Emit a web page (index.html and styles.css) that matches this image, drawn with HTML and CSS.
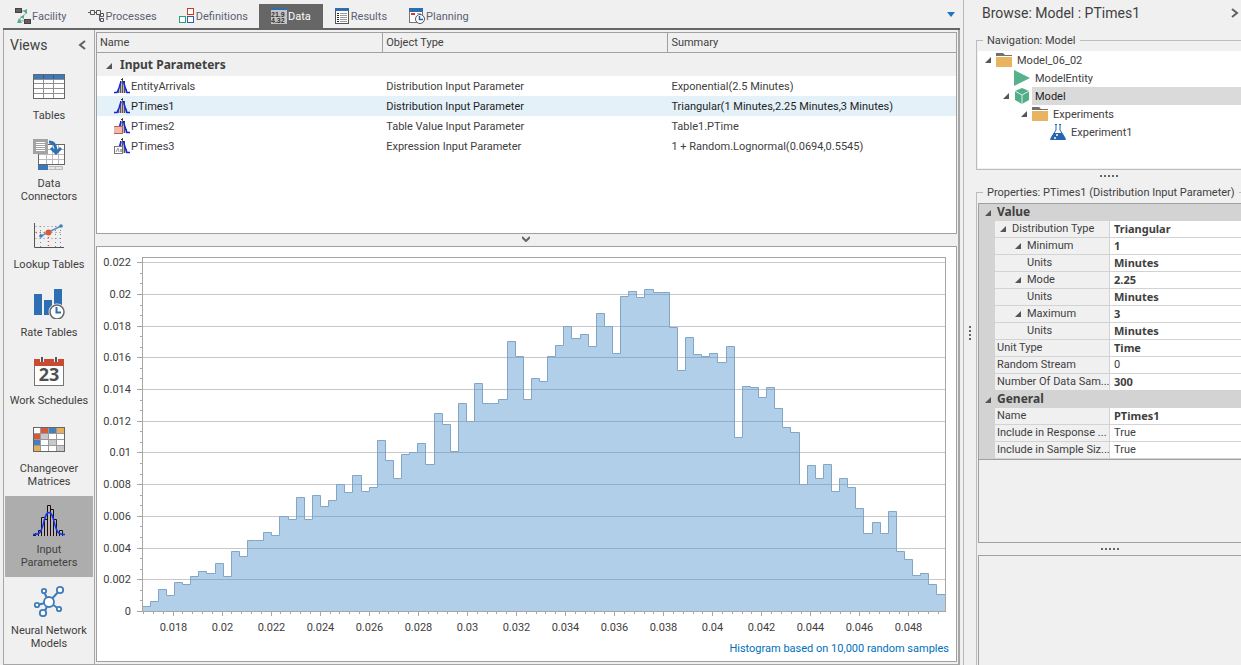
FILE: index.html
```html
<!DOCTYPE html>
<html lang="en">
<head>
    <meta charset="UTF-8">
    <meta name="viewport" content="width=device-width, initial-scale=1.0">
    <title>Model : PTimes1</title>
    <link rel="stylesheet" href="styles.css">
</head>
<body>
    <!-- shared icons -->
    <svg class="defs" width="0" height="0">
        <symbol id="dist" viewBox="0 0 16 16">
            <path d="M4.500 15V11M6.500 15V5M8.500 15V0M10.500 15V3M12.500 15V11" stroke="#5c5654"/>
            <path d="M5.500 15V10M7.500 15V3M9.500 15V3M11.500 15V8" stroke="#c3b8b4"/>
            <path d="M7 1.500H9M6 3.500H7M9 3.500H11" stroke="#333"/>
            <path d="M0 14.500H3L5 10L7 3.500" fill="none" stroke="#1226e8" stroke-width="1.500"/>
            <path d="M9.500 3.500L11 9L13 14.500H16" fill="none" stroke="#1226e8" stroke-width="1.500"/>
        </symbol>
        <symbol id="folder" viewBox="0 0 16 14">
            <path d="M0 0H7L9 2H16V3H0Z" fill="#707070"/>
            <rect y="4" width="16" height="10" fill="#e9b45f"/>
        </symbol>
        <symbol id="arrow" viewBox="0 0 6 6"><path d="M6 0V6H0Z" fill="#555"/></symbol>
    </svg>

    <div class="app">
        <div class="main">
            <nav class="tabs">
                <button class="tab">
                    <svg width="16" height="16"><path d="M6 3C14 2 12 5 8 8S3 13 11 13" fill="none" stroke="#999"/><path d="M8 3l4-2v5zM5 9l4-2v4zM4 10l3 5H2z" fill="#4fae8b"/><rect x="0.500" y="0.500" width="6" height="4" fill="#606060" stroke="#444"/><rect x="9.500" y="11.500" width="6" height="4" fill="#606060" stroke="#444"/></svg>
                    Facility
                </button>
                <button class="tab">
                    <svg width="16" height="16"><path d="M0 4.500H3M6 4.500H9M11.500 6V12.500H13M11.500 8.500H13" fill="none" stroke="#555f70"/><path d="M2.500 2.500H6.500V6.500H2.500ZM8.500 2.500H12.500V6.500H8.500ZM12.500 5.500H15.500V8.500H12.500ZM12.500 10.500H15.500V13.500H12.500Z" fill="#f0f0f0" stroke="#555"/></svg>
                    Processes
                </button>
                <button class="tab">
                    <svg width="16" height="16"><g fill="#fff" stroke-width="1"><rect x="8.500" y="0.500" width="6" height="6" stroke="#d23a22"/><rect x="0.500" y="8.500" width="6" height="6" stroke="#2aa079"/><rect x="8.500" y="8.500" width="6" height="6" stroke="#2a62ad"/></g></svg>
                    Definitions
                </button>
                <button class="tab active">
                    <svg width="16" height="16"><rect width="16" height="16" fill="#c4c4c4"/><rect width="16" height="2" fill="#2d6eb0"/><text x="0" y="9" class="digits">21.9</text><text x="0" y="15" class="digits">4.32</text></svg>
                    Data
                </button>
                <button class="tab">
                    <svg width="16" height="16"><rect x="1.500" y="0.500" width="13" height="15" fill="#fff" stroke="#555"/><rect x="1" width="14" height="3" fill="#2d6eb0"/><path d="M3 5.500H5M3 7.500H5M3 9.500H5M3 11.500H5M3 13.500H5" stroke="#222"/><path d="M6 5.500H13M6 7.500H13M6 9.500H13M6 11.500H13M6 13.500H13" stroke="#999"/></svg>
                    Results
                </button>
                <button class="tab">
                    <svg width="16" height="16"><rect x="0.500" y="0.500" width="13" height="14" fill="#fff" stroke="#777"/><rect width="14" height="4" fill="#2d6eb0"/><rect x="2" y="5" width="4" height="2" fill="#d23a22"/><path d="M8 5.500H12" stroke="#aaa"/><circle cx="11" cy="11" r="4.500" fill="#fff" stroke="#555"/><path d="M10.500 8V11.500H14" fill="none" stroke="#2a62ad" stroke-width="1.500"/></svg>
                    Planning
                </button>
                <button class="tab-menu" aria-label="More tabs"><svg width="8" height="5"><path d="M0 0H8L4 5Z" fill="#1c74c4"/></svg></button>
            </nav>

            <div class="workspace">
                <aside class="views">
                    <div class="views-head">
                        <span>Views</span>
                        <button class="chevron" aria-label="Collapse views"><svg width="8" height="10"><path d="M7 1L2 5L7 9" fill="none" stroke="#606060" stroke-width="2"/></svg></button>
                    </div>
                    <button class="view">
                        <svg width="32" height="32"><rect x="0.500" y="4.500" width="31" height="24" fill="#fff" stroke="#666"/><rect x="1" y="5" width="30" height="4" fill="#3f79b8"/><path d="M1 9.500H31M1 13.500H31M1 18.500H31M1 23.500H31M10.500 9V28M20.500 9V28" stroke="#909090"/><path d="M10.500 5V9M20.500 5V9" stroke="#2b5d96"/></svg>
                        Tables
                    </button>
                    <button class="view">
                        <svg width="32" height="32"><rect x="5.500" y="6.500" width="26" height="20" fill="#fff"/><path d="M6 16.500H31M6 21.500H31M13.500 6V26M19.500 6V26M25.500 6V26M6 11.500H31" stroke="#bbb"/><rect x="5.500" y="6.500" width="26" height="20" fill="none" stroke="#666"/><rect y="1" width="15" height="15" fill="#a3a3a3"/><path d="M3 4.500H12M3 6.500H12M3 8.500H12M3 10.500H12M3 12.500H12" stroke="#fff"/><rect x="5" y="27" width="10" height="5" fill="#3b78b7"/><path d="M15.500 28.500H29.500V31.500H15.500M22.500 28V32" fill="#e5e5e5" stroke="#bbb"/><path d="M16 4C21 4 23 7 23 14" fill="none" stroke="#2e70b3" stroke-width="3"/><path d="M18 10L23 15L28 10" fill="none" stroke="#2e70b3" stroke-width="3"/></svg>
                        Data<br>Connectors
                    </button>
                    <button class="view">
                        <svg width="32" height="32"><path d="M2.500 7.500H30M2.500 13.500H30M2.500 19.500H30M7.500 7V28M22.500 7V28M27.500 7V28" stroke="#888" stroke-dasharray="1 3"/><path d="M3 13.500H15M15.500 14V28" stroke="#d75a39" stroke-dasharray="1 3" stroke-width="1.500"/><path d="M1.500 4V28.500H31" fill="none" stroke="#555"/><path d="M8 17L28 7" stroke="#5b8fc8" stroke-width="1.500"/><circle cx="8" cy="17" r="1.800" fill="#3f7ec1"/><circle cx="28" cy="7" r="1.800" fill="#3f7ec1"/><circle cx="15.500" cy="13.500" r="3" fill="#d75a39"/></svg>
                        Lookup Tables
                    </button>
                    <button class="view">
                        <svg width="32" height="32"><path d="M1 7H9V28H1ZM11 13H19V28H11ZM21 2H29V28H21Z" fill="#2e6eb2"/><circle cx="24" cy="25" r="7.500" fill="#fff" stroke="#f0f0f0" stroke-width="2"/><circle cx="24" cy="25" r="7" fill="#fff" stroke="#666" stroke-width="1.500"/><path d="M23.500 20V25.500H28" fill="none" stroke="#2e6eb2" stroke-width="2"/></svg>
                        Rate Tables
                    </button>
                    <button class="view">
                        <svg width="32" height="32"><rect x="1.500" y="5.500" width="29" height="25" fill="#fff" stroke="#777"/><rect x="1" y="4" width="30" height="7" fill="#c94a30"/><path d="M9 2V7M23 2V7" stroke="#f0f0f0" stroke-width="4"/><path d="M9 2V7M23 2V7" stroke="#555" stroke-width="2"/><text x="16" y="26" class="day">23</text></svg>
                        Work Schedules
                    </button>
                    <button class="view">
                        <svg width="32" height="32"><rect x="0.500" y="4.500" width="31" height="24" fill="#fff"/><path d="M8 5H16V11H8ZM1 11H8V17H1Z" fill="#d9583a"/><path d="M16 5H24V11H16ZM1 17H8V23H1Z" fill="#4680bc"/><path d="M24 5H31V11H24ZM1 23H8V28H1Z" fill="#e5ae5b"/><path d="M8 11H16V17H8ZM16 17H24V23H16ZM24 23H31V28H24Z" fill="#c9c9c9"/><path d="M1 10.500H31M1 16.500H31M1 22.500H31M7.500 5V28M15.500 5V28M23.500 5V28" stroke="#999"/><rect x="0.500" y="4.500" width="31" height="24" fill="none" stroke="#666"/></svg>
                        Changeover<br>Matrices
                    </button>
                    <button class="view selected">
                        <svg width="32" height="32"><path d="M5.500 32V26.500H8.500V32M8.500 32V13.500H11.500V32M11.500 32V15.500H14.500V32M14.500 32V1.500H17.500V32M17.500 32V5.500H20.500V32M20.500 32V15.500H23.500V32M23.500 32V28.500M26.500 32V26.500H29.500V32M0 31.500H3M2.500 32V29" fill="#c1b3b3" stroke="#111"/><path d="M0 30.500C7 30.500 8 28 10 21C12 13 13 8.500 16 8.500S20 13 22 21C24 28 25 30.500 32 30.500" fill="none" stroke="#1636ec" stroke-width="1.500"/></svg>
                        Input<br>Parameters
                    </button>
                    <button class="view">
                        <svg width="32" height="32"><path d="M16 17L11 7M16 17L27 5M16 17L4 20M16 17L11 28M16 17L26 24" stroke="#3d7cb9" stroke-width="2"/><g fill="#fff" stroke="#3d7cb9" stroke-width="1.800"><circle cx="16" cy="17" r="5"/><circle cx="11" cy="6" r="2.200"/><circle cx="27" cy="5" r="3.200"/><circle cx="4" cy="20" r="2.200"/><circle cx="10" cy="28" r="3.200"/><circle cx="26" cy="24" r="2.200"/></g></svg>
                        Neural Network<br>Models
                    </button>
                </aside>

                <div class="content">
                    <div class="panel list">
                        <table class="params">
                            <colgroup><col class="col-third"><col class="col-third"><col></colgroup>
                            <thead>
                                <tr><th>Name</th><th>Object Type</th><th>Summary</th></tr>
                            </thead>
                            <tbody>
                                <tr class="group"><td colspan="3"><svg width="6" height="6"><use href="#arrow"/></svg>Input Parameters</td></tr>
                                <tr>
                                    <td><div class="name"><svg width="16" height="16"><use href="#dist"/></svg>EntityArrivals</div></td>
                                    <td>Distribution Input Parameter</td>
                                    <td>Exponential(2.5 Minutes)</td>
                                </tr>
                                <tr class="current">
                                    <td><div class="name"><svg width="16" height="16"><use href="#dist"/></svg>PTimes1</div></td>
                                    <td>Distribution Input Parameter</td>
                                    <td>Triangular(1 Minutes,2.25 Minutes,3 Minutes)</td>
                                </tr>
                                <tr>
                                    <td><div class="name"><svg width="16" height="16"><use href="#dist"/><rect y="8" width="9" height="8" fill="#a66"/><rect y="9" width="8" height="6" fill="#f4b6a6"/></svg>PTimes2</div></td>
                                    <td>Table Value Input Parameter</td>
                                    <td>Table1.PTime</td>
                                </tr>
                                <tr>
                                    <td><div class="name"><svg width="16" height="16"><use href="#dist"/><rect x="0.500" y="8.500" width="8" height="7" fill="#fff" stroke="#777"/><path d="M2 14L4 10L5 14M6 11L8 14M8 11L6 14" fill="none" stroke="#999"/></svg>PTimes3</div></td>
                                    <td>Expression Input Parameter</td>
                                    <td>1 + Random.Lognormal(0.0694,0.5545)</td>
                                </tr>
                            </tbody>
                        </table>
                    </div>
                    <button class="splitter" aria-label="Collapse chart"><svg width="8" height="6"><path d="M0 1L4 5L8 1" fill="none" stroke="#666" stroke-width="2"/></svg></button>
                    <div class="panel chart">
                        <svg id="histogram"></svg>
                        <p class="note">Histogram based on 10,000 random samples</p>
                    </div>
                </div>
            </div>
        </div>

        <div class="side">
            <div class="grip"><i></i><i></i><i></i><i></i></div>
            <div class="browse">
                <div class="browse-head">
                    <span>Browse: Model : PTimes1</span>
                    <button class="chevron" aria-label="Collapse browse"><svg width="8" height="10"><path d="M1 1L6 5L1 9" fill="none" stroke="#606060" stroke-width="2"/></svg></button>
                </div>
                <fieldset class="navigation">
                    <legend>Navigation: Model</legend>
                    <ul class="tree">
                        <li><svg class="twist" width="6" height="6"><use href="#arrow"/></svg><svg width="16" height="14"><use href="#folder"/></svg><span>Model_06_02</span></li>
                        <li class="level1"><i class="twist"></i><svg width="16" height="16"><path d="M0 0L16 8L0 16Z" fill="#56b18d"/></svg><span>ModelEntity</span></li>
                        <li class="level1 chosen"><svg class="twist" width="6" height="6"><use href="#arrow"/></svg><svg width="16" height="16"><path d="M8 0L15 3V12L8 16L1 12V3Z" fill="#50ae89"/><path d="M1 3L8 7L15 3M8 7V16" fill="none" stroke="#d9efe6"/></svg><span>Model</span></li>
                        <li class="level2"><svg class="twist" width="6" height="6"><use href="#arrow"/></svg><svg width="16" height="14"><use href="#folder"/></svg><span>Experiments</span></li>
                        <li class="level3"><i class="twist"></i><svg width="16" height="16"><path d="M6 0V6L1 14V15.500H15V14L10 6V0" fill="#fff" stroke="#2565ad"/><path d="M4 9H12L16 16H0Z" fill="#2565ad"/><path d="M5 0.500H7M9 0.500H11" stroke="#2565ad"/><circle cx="7" cy="11" r="1" fill="#fff"/><circle cx="5" cy="14" r="1" fill="#fff"/></svg><span>Experiment1</span></li>
                    </ul>
                </fieldset>
                <div class="dots"><i></i><i></i><i></i><i></i><i></i></div>
                <fieldset class="properties">
                    <legend>Properties: PTimes1 (Distribution Input Parameter)</legend>
                    <div class="grid-box">
                        <table class="props">
                            <colgroup><col class="col-gutter"><col class="col-name"><col></colgroup>
                            <tbody>
                                <tr class="category"><th class="gutter"><svg width="6" height="6"><use href="#arrow"/></svg></th><th colspan="2">Value</th></tr>
                                <tr><td class="gutter"></td><th class="in1"><svg width="6" height="6"><use href="#arrow"/></svg>Distribution Type</th><td class="set">Triangular</td></tr>
                                <tr><td class="gutter"></td><th class="in2"><svg width="6" height="6"><use href="#arrow"/></svg>Minimum</th><td class="set">1</td></tr>
                                <tr><td class="gutter"></td><th class="in3">Units</th><td class="set">Minutes</td></tr>
                                <tr><td class="gutter"></td><th class="in2"><svg width="6" height="6"><use href="#arrow"/></svg>Mode</th><td class="set">2.25</td></tr>
                                <tr><td class="gutter"></td><th class="in3">Units</th><td class="set">Minutes</td></tr>
                                <tr><td class="gutter"></td><th class="in2"><svg width="6" height="6"><use href="#arrow"/></svg>Maximum</th><td class="set">3</td></tr>
                                <tr><td class="gutter"></td><th class="in3">Units</th><td class="set">Minutes</td></tr>
                                <tr><td class="gutter"></td><th>Unit Type</th><td class="set">Time</td></tr>
                                <tr><td class="gutter"></td><th>Random Stream</th><td>0</td></tr>
                                <tr><td class="gutter"></td><th>Number Of Data Sam...</th><td class="set">300</td></tr>
                                <tr class="category"><th class="gutter"><svg width="6" height="6"><use href="#arrow"/></svg></th><th colspan="2">General</th></tr>
                                <tr><td class="gutter"></td><th>Name</th><td class="set">PTimes1</td></tr>
                                <tr><td class="gutter"></td><th>Include in Response ...</th><td>True</td></tr>
                                <tr><td class="gutter"></td><th>Include in Sample Siz...</th><td>True</td></tr>
                            </tbody>
                        </table>
                    </div>
                    <div class="dots"><i></i><i></i><i></i><i></i><i></i></div>
                    <div class="help-box"></div>
                </fieldset>
            </div>
        </div>
    </div>

    <script>
        // samples per bin, out of 10,000
        const counts = [3, 6, 14, 10, 18, 17, 22, 25, 24, 30, 22, 38, 35, 45, 45, 50, 48, 60, 58, 72,
            58, 73, 66, 70, 80, 75, 86, 76, 78, 108, 95, 84, 99, 100, 106, 93, 125, 118, 101, 131,
            120, 144, 131, 131, 134, 170, 161, 134, 147, 145, 161, 168, 180, 172, 175, 167, 188, 180, 163, 199,
            202, 198, 203, 201, 201, 179, 152, 173, 162, 161, 163, 157, 167, 110, 142, 141, 135, 141, 128, 116,
            113, 80, 92, 84, 93, 76, 84, 78, 65, 49, 56, 49, 63, 38, 33, 23, 24, 17, 11];
        const xMin = 0.016755, xMax = 0.04949, yMax = 0.02233;
        const chart = document.getElementById('histogram');

        function add(name, attrs, text) {
            const el = document.createElementNS('http://www.w3.org/2000/svg', name);
            for (const key in attrs) el.setAttribute(key, attrs[key]);
            if (text) el.textContent = text;
            chart.appendChild(el);
        }

        function drawChart() {
            chart.innerHTML = '';
            const left = 45, top = 10, right = chart.clientWidth - 11, bottom = chart.clientHeight - 26;
            const px = v => Math.round(left + (v - xMin) / (xMax - xMin) * (right - left)) + 0.5;
            const py = v => Math.round(bottom - v / yMax * (bottom - top)) + 0.5;

            for (let i = 0; i <= 33; i++) {
                const y = py(i * 2 / 3000);
                const major = i % 3 === 0;
                add('path', { class: 'axis', d: `M${left - (major ? 5 : 2)} ${y}H${left}` });
                if (major) {
                    add('path', { class: 'gridline', d: `M${left} ${y}H${right}` });
                    add('text', { class: 'label', x: left - 11, y: y + 3, 'text-anchor': 'end' }, String(i / 3 * 2 / 1000));
                }
            }
            for (let i = 42; i <= 123; i++) {
                const x = px(i * 4 / 10000);
                const major = i % 5 === 0;
                add('path', { class: 'axis', d: `M${x} ${bottom}V${bottom + (major ? 5 : 3)}` });
                if (major) {
                    add('text', { class: 'label', x: x, y: bottom + 20, 'text-anchor': 'middle' }, String(i / 5 * 2 / 1000));
                }
            }

            const step = (right - left) / counts.length;
            let line = '';
            counts.forEach((count, i) => {
                const x = Math.floor(left + i * step) + 0.5;
                const next = Math.floor(left + (i + 1) * step) + 0.5;
                line += `${i ? 'L' : 'M'}${x} ${py(count / 10000)}H${next}`;
            });
            add('path', { class: 'bars', d: `${line}V${bottom}H${left}Z` });
            add('path', { class: 'outline', d: line });
            add('rect', { class: 'frame', x: left + 0.5, y: top + 0.5, width: right - left, height: bottom - top });
        }

        drawChart();
        window.addEventListener('resize', drawChart);
    </script>
</body>
</html>
```
FILE: styles.css
```css
* {
    box-sizing: border-box;
}

body {
    margin: 0;
    font-family: Roboto, "Noto Sans", sans-serif;
    font-size: 11px;
    line-height: 13px;
    color: #404040;
    background-color: #f0f0f0;
    overflow: hidden;
}

button {
    font: inherit;
    color: inherit;
    background: none;
    border: none;
    padding: 0;
    cursor: pointer;
}

svg {
    flex-shrink: 0;
}

.defs {
    position: absolute;
}

.app {
    display: flex;
    height: 100vh;
}

.main {
    flex: 1;
    min-width: 0;
    display: flex;
    flex-direction: column;
    padding-left: 3px;
}

/* tabs */
.tabs {
    display: flex;
    align-items: flex-end;
    height: 30px;
    padding-left: 1px;
    border-bottom: 2px solid #666;
}

.tab {
    display: flex;
    align-items: center;
    gap: 1px;
    height: 24px;
    padding: 0 11px;
    color: #5c6172;
}

.tab.active {
    padding: 0 12px;
    color: #fff;
    background-color: #666;
}

.digits {
    font: bold 7px "Liberation Sans", sans-serif;
    fill: #333;
}

.tab-menu {
    margin-left: auto;
    padding: 8px 5px;
}

/* views */
.workspace {
    flex: 1;
    min-height: 0;
    display: flex;
    border: 1px solid #a6a6a6;
    border-top: none;
    border-right-width: 2px;
}

.views {
    width: 91px;
    border-right: 1px solid #a6a6a6;
    padding: 0 1px;
}

.views-head {
    display: flex;
    align-items: center;
    justify-content: space-between;
    height: 32px;
    padding: 0 7px 2px 5px;
    font-size: 14px;
}

.chevron {
    display: flex;
}

.view {
    display: block;
    width: 100%;
    padding: 8px 0;
}

.view svg {
    display: block;
    margin: 0 auto 7px;
}

.view.selected {
    background-color: #adadad;
}

.day {
    font: bold 18px "Noto Sans", sans-serif;
    text-anchor: middle;
    fill: #505050;
}

/* list */
.content {
    flex: 1;
    min-width: 0;
    display: flex;
    flex-direction: column;
    padding: 2px 1px;
}

.panel {
    background-color: #fff;
    border: 1px solid #a0a0a0;
}

.list {
    height: 202px;
}

.params {
    width: 100%;
    table-layout: fixed;
    border-collapse: separate;
    border-spacing: 0;
}

.col-third {
    width: 33.2%;
}

.params th {
    height: 20px;
    padding: 0 3px;
    text-align: left;
    font-weight: normal;
    background-color: #f0f0f0;
    border-bottom: 1px solid #a0a0a0;
}

.params th + th {
    border-left: 1px solid #a0a0a0;
}

.params td {
    height: 20px;
    padding: 0 4px;
}

.params td:first-child {
    padding-left: 17px;
}

.params .name {
    display: flex;
    align-items: center;
    gap: 1px;
}

.params .group td {
    height: 23px;
    padding-left: 9px;
    font-family: "Noto Sans", sans-serif;
    font-size: 12px;
    font-weight: bold;
    background-color: #f0f0f0;
}

.params .group svg {
    margin-right: 8px;
}

.params .current td {
    color: #1e1e1e;
    background-color: #e4f1f9;
}

.splitter {
    display: flex;
    align-items: center;
    justify-content: center;
    height: 12px;
    padding: 0 2px 2px 0;
}

/* chart */
.chart {
    flex: 1;
    min-height: 0;
    display: flex;
    flex-direction: column;
}

#histogram {
    flex: 1;
    min-height: 0;
    width: 100%;
}

.gridline {
    stroke: #c8c8c8;
}

.axis {
    stroke: #a6a6a6;
}

.frame {
    fill: none;
    stroke: #a6a6a6;
}

.label {
    fill: #404040;
}

.bars {
    fill: #438bcb;
    fill-opacity: 0.41;
}

.outline {
    fill: none;
    stroke: #83a5c6;
}

.note {
    margin: 0;
    padding: 5px 7px 6px;
    text-align: right;
    color: #0070bb;
}

/* browse */
.side {
    display: flex;
    width: 278px;
    margin-left: 3px;
    border-left: 1px solid #b8b8b8;
}

.grip {
    display: flex;
    flex-direction: column;
    justify-content: center;
    gap: 2px;
    width: 12px;
    padding-left: 5px;
}

.grip i,
.dots i {
    width: 2px;
    height: 2px;
    background-color: #666;
}

.browse {
    flex: 1;
    min-width: 0;
    display: flex;
    flex-direction: column;
}

.browse-head {
    display: flex;
    align-items: center;
    justify-content: space-between;
    height: 26px;
    padding: 0 2px 0 6px;
    font-size: 14px;
}

fieldset {
    min-width: 0;
    margin: 0;
    border: 1px solid #bcbcbc;
    border-right: none;
}

legend {
    margin-left: 5px;
    padding: 0 4px;
    white-space: nowrap;
}

.navigation {
    height: 136px;
    margin-top: 8px;
    padding: 4px 0 0 1px;
}

.tree {
    height: 117px;
    margin: 0;
    padding: 0;
    list-style: none;
    background-color: #fff;
}

.tree li {
    display: flex;
    align-items: center;
    height: 18px;
    padding-left: 7px;
}

.tree .twist {
    width: 6px;
    margin-right: 5px;
}

.tree span {
    flex: 1;
    margin-left: 2px;
    padding: 2px 0 0 3px;
    line-height: 16px;
}

.tree .level1 {
    padding-left: 25px;
}

.tree .level2 {
    padding-left: 43px;
}

.tree .level3 {
    padding-left: 61px;
}

.tree .chosen span {
    color: #1e1e1e;
    background-color: #dadada;
}

.dots {
    display: flex;
    align-items: center;
    justify-content: center;
    gap: 2px;
    height: 12px;
}

.properties {
    flex: 1;
    min-height: 0;
    display: flex;
    flex-direction: column;
    margin-top: 4px;
    padding: 4px 0 0 1px;
    border-bottom: none;
}

.grid-box {
    height: 340px;
    border: 1px solid #a0a0a0;
    border-right: none;
}

.help-box {
    flex: 1;
    border: 1px solid #a0a0a0;
    border-right: none;
    border-bottom: none;
}

.props {
    width: 100%;
    table-layout: fixed;
    border-collapse: separate;
    border-spacing: 0;
    border-bottom: 1px solid #a0a0a0;
}

.col-gutter {
    width: 16px;
}

.col-name {
    width: 115px;
}

.props th,
.props td {
    height: 17px;
    padding: 0 2px;
    line-height: 16px;
    text-align: left;
    font-weight: normal;
    white-space: nowrap;
    border-bottom: 1px solid #d3d3d3;
}

.props th {
    border-right: 1px solid #d3d3d3;
}

.props td {
    padding-left: 4px;
    background-color: #fff;
}

.props .gutter {
    padding: 0 0 0 2px;
    text-align: center;
    border-right: none;
    background-color: #d3d3d3;
}

.props .category th {
    font-family: "Noto Sans", sans-serif;
    font-size: 12px;
    font-weight: bold;
    background-color: #d3d3d3;
}

.props .set {
    font-family: "Noto Sans", sans-serif;
    font-weight: bold;
}

.props .in1 {
    padding-left: 5px;
}

.props .in2 {
    padding-left: 20px;
}

.props .in3 {
    padding-left: 32px;
}

.props .in1 svg,
.props .in2 svg {
    margin-right: 6px;
}
```
